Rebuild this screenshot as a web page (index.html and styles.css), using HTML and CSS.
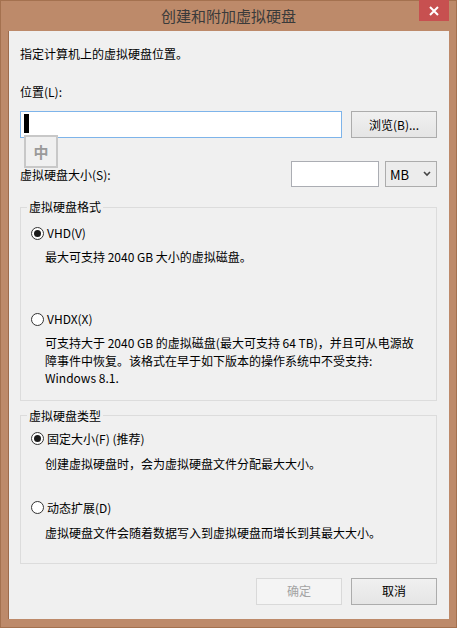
FILE: index.html
```html
<!DOCTYPE html>
<html lang="zh-CN">
<head>
    <meta charset="UTF-8">
    <meta name="viewport" content="width=device-width, initial-scale=1.0">
    <title>创建和附加虚拟硬盘</title>
    <link rel="stylesheet" href="styles.css">
</head>
<body>

    <div class="window">
        <div class="titlebar">
            <span class="title">创建和附加虚拟硬盘</span>
            <span class="close">
                <svg width="10" height="10" viewBox="0 0 10 10">
                    <path d="M1 1 L9 9 M9 1 L1 9" stroke="#fff" stroke-width="2" fill="none"/>
                </svg>
            </span>
        </div>

        <div class="client">
            <p class="intro">指定计算机上的虚拟硬盘位置。</p>

            <label class="field-label" for="vhdPath">位置(L):</label>
            <div class="path-row">
                <div class="path-input" id="vhdPath">
                    <span class="caret"></span>
                    <span class="ime">中</span>
                </div>
                <span class="btn">浏览(B)...</span>
            </div>

            <div class="size-row">
                <span class="size-label">虚拟硬盘大小(S):</span>
                <span class="size-input"></span>
                <span class="unit-select">MB
                    <svg width="8" height="6" viewBox="0 0 8 6">
                        <path d="M1 1 L4 4 L7 1" stroke="#444" stroke-width="1.6" fill="none"/>
                    </svg>
                </span>
            </div>

            <fieldset class="group group-format">
                <legend>虚拟硬盘格式</legend>
                <div class="option">
                    <span class="radio checked"></span>VHD(V)
                </div>
                <p class="desc">最大可支持 2040 GB 大小的虚拟磁盘。</p>
                <div class="option option-next">
                    <span class="radio"></span>VHDX(X)
                </div>
                <p class="desc desc-long">可支持大于 2040 GB 的虚拟磁盘(最大可支持 64 TB)，并且可从电源故<br>障事件中恢复。该格式在早于如下版本的操作系统中不受支持:<br>Windows 8.1.</p>
            </fieldset>

            <fieldset class="group group-type">
                <legend>虚拟硬盘类型</legend>
                <div class="option">
                    <span class="radio checked"></span>固定大小(F) (推荐)
                </div>
                <p class="desc">创建虚拟硬盘时，会为虚拟硬盘文件分配最大大小。</p>
                <div class="option option-next">
                    <span class="radio"></span>动态扩展(D)
                </div>
                <p class="desc">虚拟硬盘文件会随着数据写入到虚拟硬盘而增长到其最大大小。</p>
            </fieldset>

            <div class="actions">
                <span class="btn btn-disabled">确定</span>
                <span class="btn">取消</span>
            </div>
        </div>
    </div>

</body>
</html>
```

FILE: styles.css
```css
body {
    margin: 0;
    background-color: #a87459;
    font-family: 'Noto Sans CJK SC', 'Noto Sans', sans-serif;
    font-size: 12px;
    color: #000;
}

.window {
    width: 457px;
    height: 628px;
    box-sizing: border-box;
    background-color: #bd8a6a;
    border: 1px solid #a4714f;
    display: flex;
    flex-direction: column;
}

.titlebar {
    position: relative;
    height: 30px;
    display: flex;
    align-items: center;
    justify-content: center;
}

.title {
    font-size: 15px;
    line-height: 20px;
    color: #3a3a3a;
    margin-top: -1px;
}

.close {
    position: absolute;
    top: -1px;
    right: 7px;
    width: 30px;
    height: 21px;
    background-color: #c75050;
    display: flex;
    align-items: center;
    justify-content: center;
}

.client {
    margin: 0 7px;
    height: 588px;
    box-sizing: border-box;
    background-color: #f0f0f0;
    border-left: 1px solid #9c6b4c;
    padding: 14px 12px 0 11px;
}

.intro {
    margin: 0;
    line-height: 18px;
}

.field-label {
    display: block;
    margin-top: 20px;
    line-height: 18px;
}

.path-row {
    margin-top: 10px;
    display: flex;
    align-items: flex-start;
}

.path-input {
    position: relative;
    width: 322px;
    height: 27px;
    box-sizing: border-box;
    background-color: #fff;
    border: 1px solid #7eb4ea;
    padding: 2px 3px;
}

.caret {
    display: block;
    width: 5px;
    height: 19px;
    background-color: #000;
}

.ime {
    position: absolute;
    left: 3px;
    top: 23px;
    width: 34px;
    height: 33px;
    box-sizing: border-box;
    border: 2px solid #c8c8c8;
    background-color: #f0f0f0;
    color: #9a9a9a;
    font-size: 15px;
    font-weight: bold;
    display: flex;
    align-items: center;
    justify-content: center;
}

.btn {
    width: 86px;
    height: 27px;
    box-sizing: border-box;
    border: 1px solid #acacac;
    background: linear-gradient(#f0f0f0, #e5e5e5);
    display: flex;
    align-items: center;
    justify-content: center;
    line-height: 18px;
}

.path-row .btn {
    margin-left: auto;
}

.btn-disabled {
    border-color: #d9d9d9;
    background: #f4f4f4;
    color: #a3a3a3;
}

.size-row {
    margin-top: 23px;
    display: flex;
    align-items: center;
}

.size-label {
    flex: 1;
    line-height: 18px;
    margin-top: 2px;
}

.size-input {
    width: 88px;
    height: 26px;
    box-sizing: border-box;
    border: 1px solid #abadb3;
    background-color: #fff;
}

.unit-select {
    margin-left: 6px;
    width: 52px;
    height: 26px;
    box-sizing: border-box;
    border: 1px solid #acacac;
    background-color: #ececec;
    padding: 0 5px 0 4px;
    display: flex;
    align-items: center;
    justify-content: space-between;
    font-size: 13px;
}

.group {
    margin: 12px 0 0;
    padding: 0 0 0 10px;
    border: 1px solid #dcdcdc;
}

.group legend {
    margin-left: -4px;
    padding: 0 2px;
    line-height: 16px;
}

.group-format {
    padding-top: 9px;
    padding-bottom: 13px;
}

.group-type {
    margin-top: 7px;
    padding-top: 6px;
    padding-bottom: 21px;
}

.option {
    display: flex;
    align-items: center;
    line-height: 18px;
}

.option-next {
    margin-top: 44px;
}

.group-type .option-next {
    margin-top: 26px;
}

.radio {
    width: 13px;
    height: 13px;
    box-sizing: border-box;
    border: 1px solid #333;
    border-radius: 50%;
    background-color: #fff;
    margin-right: 3px;
    display: flex;
    align-items: center;
    justify-content: center;
}

.radio.checked::after {
    content: '';
    width: 7px;
    height: 7px;
    border-radius: 50%;
    background-color: #1a1a1a;
}

.desc {
    margin: 6px 0 0 14px;
    line-height: 18px;
    padding-right: 10px;
}

.group-type .option + .desc {
    margin-top: 7px;
}

.desc-long {
    line-height: 17.5px;
}

.actions {
    margin-top: 14px;
    display: flex;
    justify-content: flex-end;
    gap: 9px;
}
```
